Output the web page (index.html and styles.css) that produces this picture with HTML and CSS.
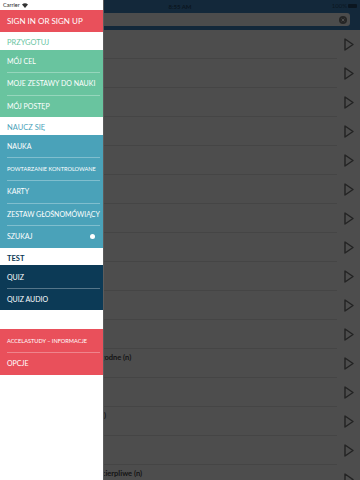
FILE: index.html
```html
<!DOCTYPE html>
<html lang="pl">
<head>
    <meta charset="UTF-8">
    <meta name="viewport" content="width=device-width, initial-scale=1.0">
    <title>AccelaStudy</title>
    <link rel="stylesheet" href="styles.css">
</head>
<body>
    <div class="screen">
        <!-- app behind the drawer, dimmed -->
        <div class="app">
            <div class="app-header">
                <div class="status-bar">
                    <span class="time">8:55 AM</span>
                    <span class="battery">100% <span class="battery-icon"></span></span>
                </div>
                <div class="search">
                    <div class="search-field">
                        <svg class="clear" width="8" height="8" viewBox="0 0 8 8">
                            <circle cx="4" cy="4" r="4" fill="#262626"/>
                            <path d="M2.6 2.6 L5.4 5.4 M5.4 2.6 L2.6 5.4" stroke="#4d4d4d" stroke-width="1"/>
                        </svg>
                    </div>
                </div>
            </div>

            <!-- rows whose words sit fully under the drawer are left empty -->
            <ul class="word-list">
                <li class="word"></li>
                <li class="word"></li>
                <li class="word"></li>
                <li class="word"></li>
                <li class="word"></li>
                <li class="word"></li>
                <li class="word"></li>
                <li class="word"></li>
                <li class="word"></li>
                <li class="word"></li>
                <li class="word"></li>
                <li class="word"><span class="term">mieszkania są tu bardzo wygodne (n)</span></li>
                <li class="word"></li>
                <li class="word"><span class="term">nowi przyjaciele ze szkoły (n)</span></li>
                <li class="word"></li>
                <li class="word"><span class="term">małe dzieci są tu bardzo niecierpliwe (n)</span></li>
            </ul>
        </div>

        <!-- side menu -->
        <nav class="drawer">
            <div class="drawer-status">
                Carrier
                <svg width="6" height="5" viewBox="0 0 6 5">
                    <path d="M3 5 L0 1.6 A4.4 4.4 0 0 1 6 1.6 Z" fill="#333"/>
                </svg>
            </div>

            <div class="group red">
                <a class="item large">SIGN IN OR SIGN UP</a>
            </div>

            <div class="section green-text">PRZYGOTUJ</div>
            <div class="group green">
                <a class="item">MÓJ CEL</a>
                <a class="item">MOJE ZESTAWY DO NAUKI</a>
                <a class="item">MÓJ POSTĘP</a>
            </div>

            <div class="section teal-text">NAUCZ SIĘ</div>
            <div class="group teal">
                <a class="item">NAUKA</a>
                <a class="item small">POWTARZANIE KONTROLOWANE</a>
                <a class="item">KARTY</a>
                <a class="item">ZESTAW GŁOŚNOMÓWIĄCY</a>
                <a class="item">SZUKAJ <span class="dot"></span></a>
            </div>

            <div class="section navy-text">TEST</div>
            <div class="group navy">
                <a class="item">QUIZ</a>
                <a class="item">QUIZ AUDIO</a>
            </div>

            <div class="spacer"></div>
            <div class="group red">
                <a class="item small">ACCELASTUDY – INFORMACJE</a>
                <a class="item">OPCJE</a>
            </div>
        </nav>
    </div>
</body>
</html>
```

FILE: styles.css
```css
body {
    margin: 0;
    font-family: Lato, "Open Sans", sans-serif;
}

.screen {
    position: relative;
    width: 360px;
    height: 480px;
    overflow: hidden;
    background: #4d4d4d;
}

/* dimmed app */

.app-header {
    background: #13283a;
    height: 30px;
}

.status-bar {
    height: 13px;
    display: flex;
    justify-content: center;
    align-items: center;
    position: relative;
    font-size: 6px;
    color: #0b1620;
}

.time {
    font-weight: bold;
}

.battery {
    position: absolute;
    right: 3px;
    top: 2px;
    display: flex;
    align-items: center;
    gap: 1px;
}

.battery-icon {
    width: 9px;
    height: 4px;
    background: #0b1620;
    border-radius: 1px;
}

.search {
    padding: 0 10px 0 0;
}

.search-field {
    height: 13px;
    background: #4c4c4c;
    border-radius: 3px;
    display: flex;
    justify-content: flex-end;
    align-items: center;
    padding-right: 3px;
}

.word-list {
    list-style: none;
    margin: 0;
    padding: 0;
}

.word {
    height: 24px;
    padding: 4px 0 0 10px;
    border-bottom: 1px solid #454545;
    margin-right: 23px;
    position: relative;
    font-size: 7.5px;
    line-height: 9px;
}

/* play button, drawn in the 23px gutter right of the row line */
.word::after {
    content: "";
    position: absolute;
    right: -17px;
    top: 8px;
    width: 10px;
    height: 13px;
    background: url("data:image/svg+xml;utf8,<svg xmlns='http://www.w3.org/2000/svg' width='10' height='13' viewBox='0 0 10 13'><path d='M1 1 L9 6.5 L1 12 Z' fill='none' stroke='%23232323' stroke-width='1.4' stroke-linejoin='round'/></svg>") no-repeat;
}

.term {
    display: block;
    font-weight: bold;
    color: #141414;
    white-space: nowrap;
}

/* drawer */

.drawer {
    position: absolute;
    left: 0;
    top: 0;
    width: 103px;
    height: 480px;
    background: #fff;
    border-right: 1px solid #5c5c5c;
}

.drawer-status {
    height: 10px;
    font-size: 5.5px;
    color: #222;
    padding-left: 3px;
    display: flex;
    align-items: center;
    gap: 2px;
}

.group .item {
    display: flex;
    align-items: center;
    height: 22.6px;
    padding: 0 8px 0 7px;
    color: #fff;
    font-size: 7px;
    white-space: nowrap;
    position: relative;
    box-sizing: border-box;
}

.group .item + .item::before {
    content: "";
    position: absolute;
    left: 7px;
    right: 3px;
    top: 0;
    border-top: 1px solid rgba(255, 255, 255, 0.3);
}

.group .item.large {
    font-size: 8px;
    height: 22px;
}

.group .item.small {
    font-size: 5.6px;
}

.dot {
    margin-left: auto;
    width: 5px;
    height: 5px;
    border-radius: 50%;
    background: #fff;
}

.section {
    height: 17.5px;
    display: flex;
    align-items: center;
    padding: 3px 7px 0;
    box-sizing: border-box;
    font-size: 7.5px;
}

.spacer {
    height: 19px;
}

.red { background: #e9505b; }
.green { background: #69c49f; }
.teal { background: #4aa2b9; }
.navy { background: #0c3a56; }

.green-text { color: #69c49f; }
.teal-text { color: #4aa2b9; }
.navy-text { color: #0c3a56; font-weight: bold; }
```
